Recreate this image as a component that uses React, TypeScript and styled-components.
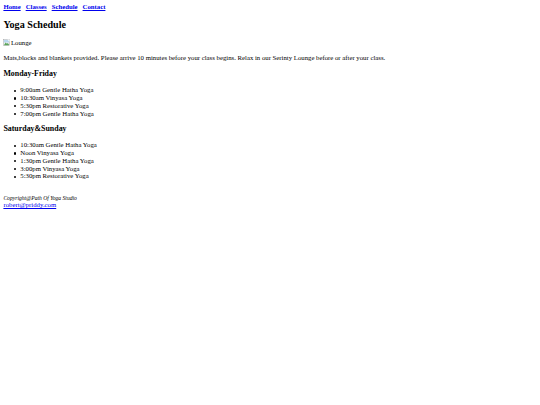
import styled, { createGlobalStyle } from "styled-components";

// sizes are the browser defaults of a 1280px page, shrunk to 540px (x 0.421875)
const Global = createGlobalStyle`
  body {
    margin: 3.4px;
    font-family: "Liberation Serif", "Times New Roman", serif;
    font-size: 6.75px;
    line-height: 1.15;
    color: #000;
    background: #fff;
  }
`;

const Nav = styled.nav`
  display: flex;
  gap: 5px;
  font-weight: bold;
`;

const NavLink = styled.a`
  color: #0000ee;
  text-decoration: underline;
`;

const Title = styled.h2`
  font-size: 10.125px;
  margin: 7.4px 0 8.4px;
`;

const Day = styled.h3`
  font-size: 7.9px;
  margin: 7.1px 0 7.9px;
`;

const Para = styled.p`
  margin: 6.75px 0;
`;

const Broken = styled.span`
  display: inline-flex;
  align-items: center;
  gap: 0.5px;
`;

const ClassList = styled.ul`
  margin: 6.75px 0;
  padding-left: 16.9px;
  list-style: none;
`;

const Item = styled.li`
  &::before {
    content: "";
    display: inline-block;
    width: 2.2px;
    height: 2.2px;
    border-radius: 50%;
    background: #000;
    margin-left: -6.2px;
    margin-right: 4px;
    vertical-align: middle;
  }
`;

const Footer = styled.footer`
  margin-top: 15px;
`;

const Copy = styled.small`
  display: block;
  font-style: italic;
  font-size: 5.6px;
`;

const Mail = styled.a`
  color: #0000ee;
  text-decoration: underline;
`;

function BrokenImage({ alt }: { alt: string }) {
  return (
    <Broken>
      <svg width="7" height="7" viewBox="0 0 16 16">
        <rect x="1.5" y="1.5" width="13" height="13" fill="#f2f2f2" stroke="#9a9a9a" />
        <rect x="2" y="2" width="12" height="6" fill="#b9d7ef" />
        <path d="M2 14 L6 8 L9 11 L11 9 L14 13 L14 14 Z" fill="#5ba55b" />
        <path d="M10 1 L15 1 L15 6 Z" fill="#fff" />
      </svg>
      {alt}
    </Broken>
  );
}

const weekday = [
  "9:00am Gentle Hatha Yoga",
  "10:30am Vinyasa Yoga",
  "5:30pm Restorative Yoga",
  "7:00pm Gentle Hatha Yoga",
];

const weekend = [
  "10:30am Gentle Hatha Yoga",
  "Noon Vinyasa Yoga",
  "1:30pm Gentle Hatha Yoga",
  "3:00pm Vinyasa Yoga",
  "5:30pm Restorative Yoga",
];

export default function App() {
  return (
    <>
      <Global />
      <Nav>
        <NavLink href="#">Home</NavLink>
        <NavLink href="#">Classes</NavLink>
        <NavLink href="#">Schedule</NavLink>
        <NavLink href="#">Contact</NavLink>
      </Nav>
      <Title>Yoga Schedule</Title>
      <Para>
        <BrokenImage alt="Lounge" />
      </Para>
      <Para>
        Mats,blocks and blankets provided. Please arrive 10 minutes before your class begins. Relax in our Serinty Lounge before or after your class.
      </Para>
      <Day>Monday-Friday</Day>
      <ClassList>
        {weekday.map(c => <Item key={c}>{c}</Item>)}
      </ClassList>
      <Day>Saturday&amp;Sunday</Day>
      <ClassList>
        {weekend.map(c => <Item key={c}>{c}</Item>)}
      </ClassList>
      <Footer>
        <Copy>Copyright@Path Of Yoga Studio</Copy>
        <Mail href="#">robert@priddy.com</Mail>
      </Footer>
    </>
  );
}
